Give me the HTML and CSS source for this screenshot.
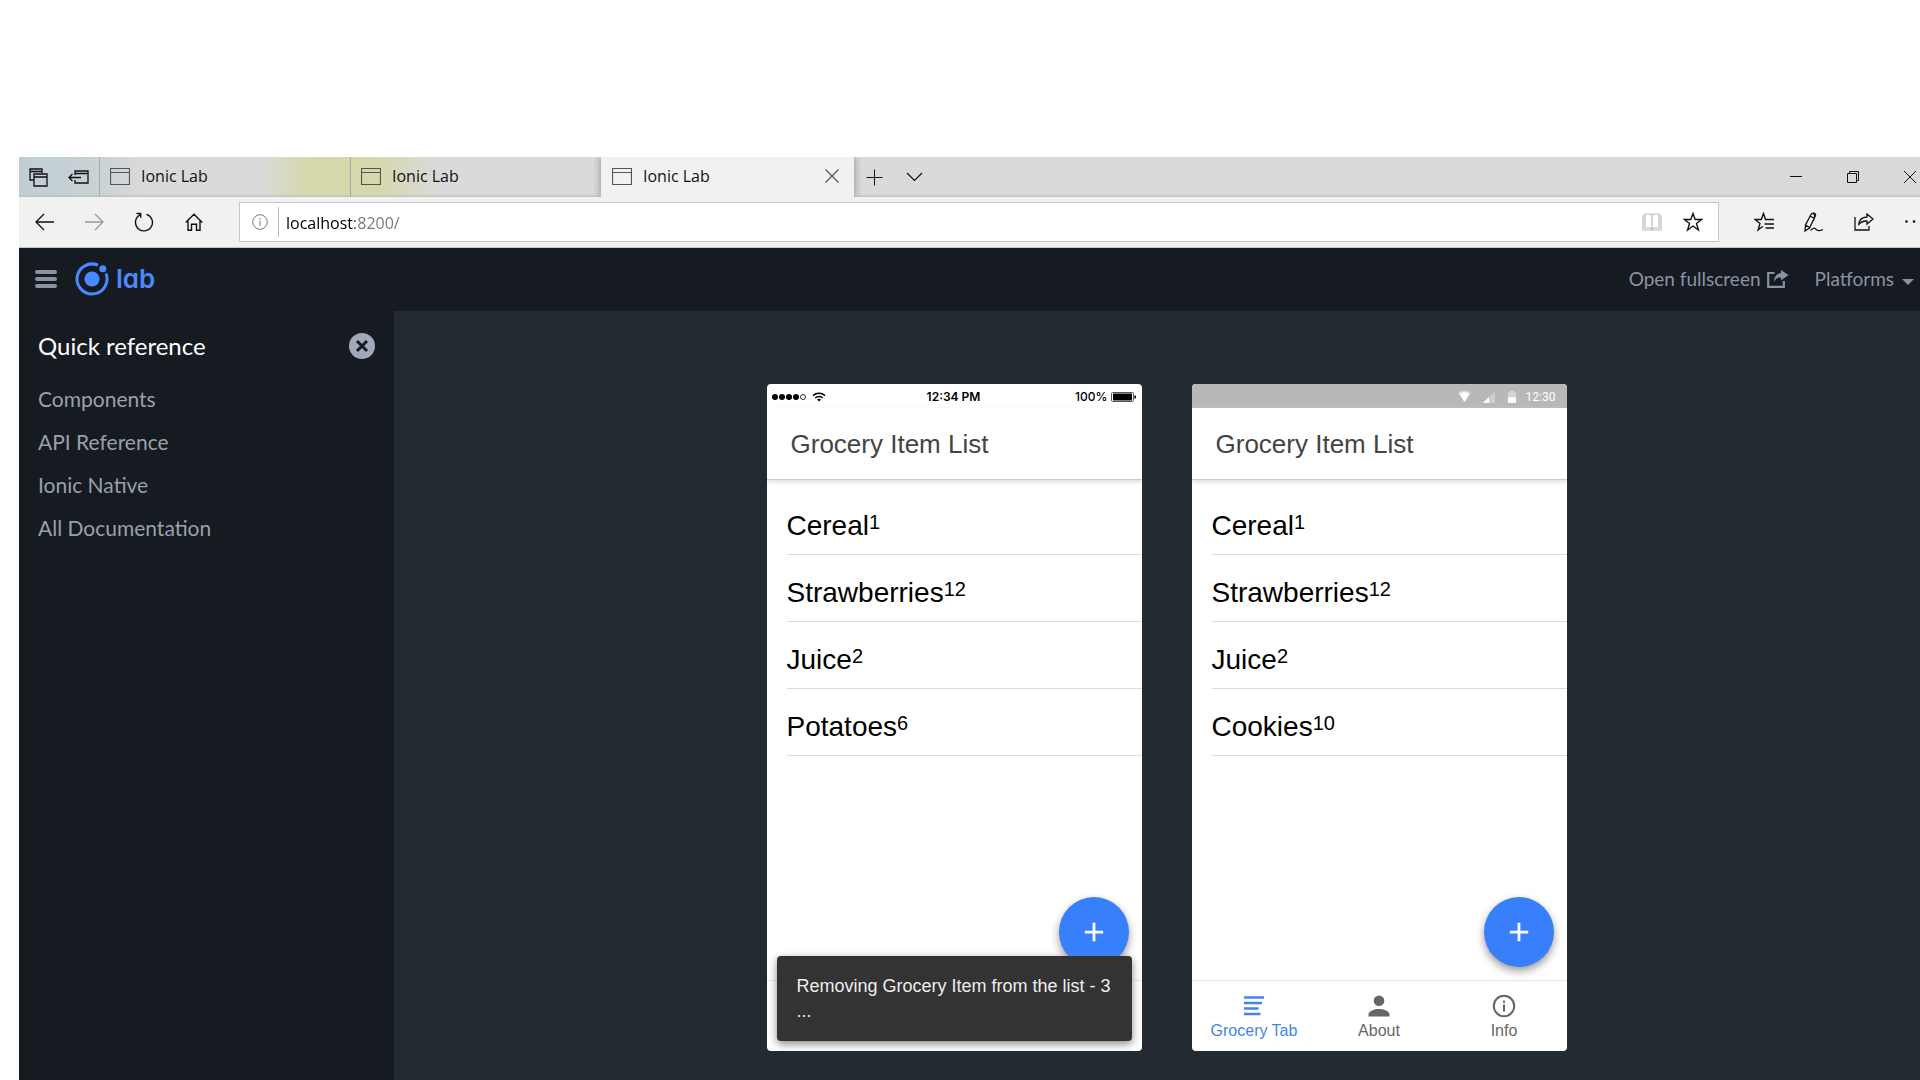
FILE: index.html
```html
<!DOCTYPE html>
<html lang="en">
<head>
<meta charset="utf-8">
<title>Ionic Lab</title>
<link rel="stylesheet" href="styles.css">
</head>
<body>
<svg class="sprite" aria-hidden="true">
  <symbol id="page" viewBox="0 0 20 17"><path d="M.5.5h19v16H.5zM.5 4.500h19" fill="none" stroke="currentColor" stroke-width="1.200"/></symbol>
  <symbol id="plus" viewBox="0 0 24 24"><path d="M12 2v20M2 12h20" fill="none" stroke="currentColor" stroke-width="3"/></symbol>
  <symbol id="lines" viewBox="0 0 24 24"><path d="M2 3.500h20M2 9h18M2 14.500h14.500M2 20h16.500" fill="none" stroke="currentColor" stroke-width="2.600"/></symbol>
  <symbol id="cross" viewBox="0 0 14 14"><path d="M.5.5l13 13M13.500.5l-13 13" fill="none" stroke="currentColor" stroke-width="1.200"/></symbol>
</svg>

<div class="window">
  <div class="tabstrip">
    <div class="tab-tools">
      <button class="icon-btn" aria-label="Tabs you've set aside"><svg width="19" height="19" viewBox="0 0 19 19" fill="none" stroke="currentColor" stroke-width="1.300"><path d="M5 12H1V1h12v4M1 3.500h12M5 6h13v12H5zM5 9h13"/></svg></button>
      <button class="icon-btn" aria-label="Set these tabs aside"><svg width="21" height="15" viewBox="0 0 21 15" fill="none" stroke="currentColor" stroke-width="1.300"><path d="M7 5V1h13v12H7V10M7 3.500h13M1 7.500h12M4.500 4L1 7.500 4.500 11"/></svg></button>
    </div>
    <button class="tab"><svg width="20" height="17"><use href="#page"/></svg><span>Ionic Lab</span></button>
    <button class="tab"><svg width="20" height="17"><use href="#page"/></svg><span>Ionic Lab</span></button>
    <div class="tab tab-active"><svg width="20" height="17"><use href="#page"/></svg><span>Ionic Lab</span><button class="tab-close" aria-label="Close tab"><svg width="14" height="14"><use href="#cross"/></svg></button></div>
    <button class="icon-btn strip-btn" aria-label="New tab"><svg width="17" height="17" viewBox="0 0 17 17" stroke="currentColor"><path d="M8.500.5v16M.5 8.500h16"/></svg></button>
    <button class="icon-btn strip-btn" aria-label="Tab previews"><svg width="17" height="10" viewBox="0 0 17 10" fill="none" stroke="currentColor" stroke-width="1.200"><path d="M1 1l7.500 7.500L16 1"/></svg></button>
    <div class="win-controls">
      <button class="win-btn" aria-label="Minimize"><svg width="12" height="12" viewBox="0 0 12 12" stroke="currentColor"><path d="M0 5.500h12"/></svg></button>
      <button class="win-btn" aria-label="Restore"><svg width="12" height="12" viewBox="0 0 12 12" fill="none" stroke="currentColor"><path d="M.5 2.500h9v9h-9zM2.500 2.500v-2h9v9h-2"/></svg></button>
      <button class="win-btn" aria-label="Close"><svg width="12" height="12" viewBox="0 0 12 12" stroke="currentColor"><path d="M0 0l12 12M12 0L0 12"/></svg></button>
    </div>
  </div>

  <div class="toolbar">
    <button class="nav-btn" aria-label="Back"><svg width="19" height="18" viewBox="0 0 19 18" fill="none" stroke="currentColor" stroke-width="1.300"><path d="M19 9H1M9 1L1 9l8 8"/></svg></button>
    <button class="nav-btn nav-off" aria-label="Forward"><svg width="19" height="18" viewBox="0 0 19 18" fill="none" stroke="currentColor" stroke-width="1.300"><path d="M0 9h18M10 1l8 8-8 8"/></svg></button>
    <button class="nav-btn" aria-label="Refresh"><svg width="20" height="20" viewBox="0 0 20 20" fill="none" stroke="currentColor" stroke-width="1.400"><path d="M12.500 2.300a8.500 8.500 0 1 1-6.500.6M2.500 1.500h4.200v4.200"/></svg></button>
    <button class="nav-btn" aria-label="Home"><svg width="18" height="18" viewBox="0 0 18 18" fill="none" stroke="currentColor" stroke-width="1.400"><path d="M.7 9.500L9 1.200l8.300 8.300M3 7.500v9.700h3.500v-6h5v6H15V7.500"/></svg></button>
    <div class="address">
      <svg class="address-info" width="16" height="16" viewBox="0 0 16 16" fill="none" stroke="currentColor"><circle cx="8" cy="8" r="7.300"/><path d="M8 6.800v5M8 4v1.500"/></svg>
      <input class="address-field" type="text" value="localhost:8200/" aria-label="Address">
      <button class="address-btn address-book" aria-label="Reading view"><svg width="20" height="18" viewBox="0 0 20 18" fill="none" stroke="currentColor" stroke-width="1.200"><path d="M3 1h5l2 1 2-1h5v14h-5l-2 1-2-1H3zM10 2v14M3 3H1v14h18V3h-2"/></svg></button>
      <button class="address-btn" aria-label="Add to favorites"><svg width="20" height="20" viewBox="0 0 20 20" fill="none" stroke="currentColor" stroke-width="1.400"><path d="M10 1.500l2.200 6H18.500l-5 3.900 1.900 6.600L10 14l-5.400 4 1.900-6.600-5-3.900h6.300z"/></svg></button>
    </div>
    <button class="nav-btn" aria-label="Hub"><svg width="20" height="20" viewBox="0 0 20 20" fill="none" stroke="currentColor" stroke-width="1.400"><path d="M13 7.500h-1.500L9.500 1.500l-2.200 6H1l5 3.900L4.100 18 9 14.300M11.500 7.500H20M10.500 12H20M11.500 16H20"/></svg></button>
    <button class="nav-btn" aria-label="Add notes"><svg width="20" height="20" viewBox="0 0 20 20" fill="none" stroke="currentColor" stroke-width="1.300"><path d="M1 19l.5-6L7 2.500C8 .5 12 .5 11.500 3.500L5.500 16zM6 4l4.500 2.500M9.500 1.500l1.500 2-1.500 5M1.500 13l4 2.500M6.500 18.500c3.500-3.500 4.500-2.500 6-.8 1.800 1.800 3.500 1.300 6.500-.2"/></svg></button>
    <button class="nav-btn" aria-label="Share"><svg width="20" height="18" viewBox="0 0 20 18" fill="none" stroke="currentColor" stroke-width="1.300"><path d="M1 4v13h14v-4M13 1l6 5-6 5V8c-4-.2-6.500 1-8.500 4C5 7 8 4.200 13 4z"/></svg></button>
    <button class="nav-btn" aria-label="More"><svg width="18" height="4" viewBox="0 0 18 4" fill="currentColor"><circle cx="1.500" cy="1.500" r="1.300"/><circle cx="9" cy="1.500" r="1.300"/><circle cx="16.500" cy="1.500" r="1.300"/></svg></button>
  </div>

  <header class="lab-header">
    <button class="menu-btn" aria-label="Menu"><svg width="22" height="18" viewBox="0 0 22 18" stroke="currentColor" stroke-width="4" stroke-linecap="round"><path d="M2 2h18M2 9h18M2 16h18"/></svg></button>
    <a class="logo" href="#"><svg width="34" height="34" viewBox="0 0 34 34" fill="currentColor"><path d="M23 3.200A15 15 0 1 0 31 11.500" fill="none" stroke="currentColor" stroke-width="3"/><circle cx="17" cy="17" r="7.600"/><circle cx="27.800" cy="6.700" r="3.500"/></svg><span>lab</span></a>
    <nav class="lab-nav">
      <a class="lab-link" href="#">Open fullscreen <svg width="22" height="18" viewBox="0 0 22 18" fill="none" stroke="currentColor" stroke-width="2.200"><path d="M7.500 3H1.200v13.800h15.600V11"/><path d="M14 0l7.500 5L14 10.500V7.500c-3.500 0-5.500 1-7 4.500 0-5 2.500-8.500 7-9z" fill="currentColor" stroke="none"/></svg></a>
      <button class="lab-link">Platforms <svg class="caret" width="12" height="6" viewBox="0 0 12 6" fill="currentColor"><path d="M0 0h12L6 6z"/></svg></button>
    </nav>
  </header>

  <div class="lab-body">
    <aside class="sidebar">
      <div class="sidebar-head">
        <h2>Quick reference</h2>
        <button class="sidebar-close" aria-label="Close"><svg width="26" height="26" viewBox="0 0 26 26"><circle cx="13" cy="13" r="13" fill="#a2a9b8"/><path d="M8 8l10 10M18 8L8 18" stroke="#161a21" stroke-width="3"/></svg></button>
      </div>
      <ul class="doc-links">
        <li><a href="#">Components</a></li>
        <li><a href="#">API Reference</a></li>
        <li><a href="#">Ionic Native</a></li>
        <li><a href="#">All Documentation</a></li>
      </ul>
    </aside>

    <main class="stage">
      <section class="phone">
        <div class="status status-ios">
          <div class="signal"><svg width="54" height="14" viewBox="0 0 54 14"><circle cx="3" cy="7" r="3"/><circle cx="10" cy="7" r="3"/><circle cx="17" cy="7" r="3"/><circle cx="24" cy="7" r="3"/><circle cx="31" cy="7" r="2.500" fill="none" stroke="#000" stroke-width=".8"/><g fill="none" stroke="#000" stroke-width="1.500"><path d="M41 5.600a9 9 0 0 1 12 0M43.200 8a5.800 5.800 0 0 1 7.600 0"/></g><path d="M45 9.600a3 3 0 0 1 4 0L47 11.500z"/></svg></div>
          <span class="ios-time">12:34 PM</span>
          <div class="ios-battery"><span>100%</span><svg width="25" height="10" viewBox="0 0 25 10"><rect x=".5" y=".5" width="22" height="9" rx="1" fill="none" stroke="#555"/><path d="M2 1.500h19v7H2zM23.500 3l1.500 1v2l-1.500 1z"/></svg></div>
        </div>
        <h1 class="app-title">Grocery Item List</h1>
        <ul class="items">
          <li>Cereal<sup>1</sup></li>
          <li>Strawberries<sup>12</sup></li>
          <li>Juice<sup>2</sup></li>
          <li>Potatoes<sup>6</sup></li>
        </ul>
        <button class="fab" aria-label="Add item"><svg width="22" height="22"><use href="#plus"/></svg></button>
        <nav class="app-tabs"></nav>
        <div class="toast" role="status">Removing Grocery Item from the list - 3 ...</div>
      </section>

      <section class="phone">
        <div class="status status-android">
          <svg width="60" height="14" viewBox="0 0 60 14" fill="#fff"><path d="M0 3a10 10 0 0 1 13 0L6.500 12z" opacity=".4"/><path d="M1.500 4a8 8 0 0 1 10 0L6.500 12z"/><path d="M25 13L37 1v12z" opacity=".3"/><path d="M25 13l6-6v6z"/><path d="M50 2.500h2V1h4v1.500h2V13h-8z" opacity=".4"/><path d="M50 7h8v6h-8z"/></svg>
          <span>12:30</span>
        </div>
        <h1 class="app-title">Grocery Item List</h1>
        <ul class="items">
          <li>Cereal<sup>1</sup></li>
          <li>Strawberries<sup>12</sup></li>
          <li>Juice<sup>2</sup></li>
          <li>Cookies<sup>10</sup></li>
        </ul>
        <button class="fab" aria-label="Add item"><svg width="22" height="22"><use href="#plus"/></svg></button>
        <nav class="app-tabs">
          <a class="app-tab app-tab-on" href="#"><svg width="24" height="24"><use href="#lines"/></svg>Grocery Tab</a>
          <a class="app-tab" href="#"><svg width="24" height="24" viewBox="0 0 24 24" fill="currentColor"><circle cx="12" cy="6.700" r="5.300"/><path d="M1.500 22.500v-2c0-3.500 6-5.500 10.500-5.500s10.500 2 10.500 5.500v2z"/></svg>About</a>
          <a class="app-tab" href="#"><svg width="24" height="24" viewBox="0 0 24 24" fill="none" stroke="currentColor" stroke-width="2"><circle cx="12" cy="12" r="10.200"/><path d="M12 10.500v7M12 6.500v2.200"/></svg>Info</a>
        </nav>
      </section>
    </main>
  </div>
</div>
</body>
</html>
```
FILE: styles.css
```css
* { box-sizing: border-box; }
body { margin: 0; background: #fff; overflow: hidden; font-family: "Liberation Sans", Arial, sans-serif; }
button { margin: 0; padding: 0; border: 0; background: none; color: inherit; font: inherit; }
a { color: inherit; text-decoration: none; }
ul { margin: 0; padding: 0; list-style: none; }
h1, h2 { margin: 0; font-weight: 400; }
svg { flex: none; display: block; }
.sprite { position: absolute; width: 0; height: 0; }

/* the window runs past the right edge of the screen */
.window { display: flex; flex-direction: column; min-height: calc(100vh - 157px); margin: 157px -19px 0 19px; }

.tabstrip {
  display: flex; height: 40px; color: #111;
  background: linear-gradient(90deg, #c0ced3 0, #c9d2d5 80px, #dadada 130px, #dadada 240px, #d6d8ac 290px, #d6d8ac 360px, #dadada 420px);
  box-shadow: inset 0 -3px 3px -2px #bbb;
  font: 16px/24px "Open Sans", "Noto Sans", sans-serif;
}
.tab-tools { display: flex; width: 80px; align-items: center; justify-content: space-around; }
.icon-btn { display: flex; align-items: center; justify-content: center; }
.tab { display: flex; align-items: center; gap: 11px; width: 251px; padding: 0 15px 2px 10px; border-left: 1px solid #a9aba8; text-align: left; }
.tab svg { color: #555; }
.tab-active { width: 253px; padding-left: 11px; background: #f1f1f1; border-left: 0; box-shadow: 0 0 8px #888; clip-path: inset(0 -8px 0 -8px); }
.tab-close { margin-left: auto; }
.strip-btn { width: 40px; }
.win-controls { display: flex; margin-left: auto; padding-right: 1px; }
.win-btn { display: flex; width: 57px; align-items: center; justify-content: center; }

.toolbar { display: flex; height: 51px; align-items: center; background: #f1f1f1; border-bottom: 1px solid #c4c4c4; color: #111; }
.nav-btn { display: flex; flex: none; width: 50px; height: 40px; align-items: center; justify-content: center; }
.nav-off { color: #999; }
.address { display: flex; flex: 1; align-items: center; height: 40px; margin: 0 20px; padding: 0 5px 0 12px; background: #fff; border: 1px solid #c6c6c6; }
.address-info { margin-right: 10px; color: #777; }
.address-field {
  flex: 1; height: 30px; padding: 2px 0 0 7px; border: 0; border-left: 1px solid #bbb; outline: 0;
  font: 16px/24px "Open Sans", "Noto Sans", sans-serif;
  color: transparent; background: linear-gradient(90deg, #000 76px, #777 76px) text;
}
.address-btn { display: flex; width: 41px; justify-content: center; }
.address-book { color: #bbb; }

.lab-header { display: flex; align-items: center; height: 63px; padding: 0 25px 2px 16px; background: #161a21; color: #8b93a2; font: 19px/24px Lato, sans-serif; }
.logo { display: flex; align-items: center; gap: 7px; margin-left: 18px; color: #488aff; font: 600 26px/34px Inter, sans-serif; font-feature-settings: "cv11"; }
.lab-nav { display: flex; gap: 26px; margin-left: auto; }
.lab-link { display: flex; align-items: center; gap: 6px; }
.lab-link .caret { margin: 6px 0 0 2px; }

.lab-body { display: flex; flex: 1; }
.sidebar { flex: none; width: 375px; padding: 18px 19px; background: #161a21; font-family: Lato, sans-serif; }
.sidebar-head { display: flex; align-items: center; justify-content: space-between; }
.sidebar-head h2 { color: #fff; font-size: 24px; line-height: 34px; }
.doc-links { margin-top: 14px; color: #9aa0aa; font-size: 21px; line-height: 43px; }

.stage { display: flex; flex: 1; align-items: flex-start; justify-content: center; gap: 50px; padding: 73px 0 29px; background: #242a32; }
.phone { position: relative; display: flex; flex-direction: column; width: 375px; min-height: 667px; background: #fff; border-radius: 4px; overflow: hidden; }
.status { display: flex; align-items: center; height: 24px; font-size: 12px; line-height: 16px; }
.status-ios { padding: 1px 6px 0 5px; font-family: Inter, sans-serif; }
.signal, .ios-battery { flex: 1; }
.ios-time { font-weight: 600; }
.ios-battery { display: flex; align-items: center; justify-content: flex-end; gap: 3px; font-weight: 500; }
.status-android { justify-content: flex-end; gap: 8px; padding: 1px 11px 0; background: #b8b8b8; color: #fff; font-family: Roboto, sans-serif; }
.app-title { padding: 21px 24px 20px; border-bottom: 1px solid #ccc; box-shadow: 0 2px 4px #ddd; color: #444; font-size: 26px; line-height: 30px; }
.items { padding: 8px 0 0 20px; }
.items li { height: 67px; padding-top: 18px; border-bottom: 1px solid #dcdcdc; color: #000; font-size: 28px; line-height: 40px; }
.items sup { font-size: 20px; line-height: 0; vertical-align: 6px; }
.fab { display: flex; align-items: center; justify-content: center; width: 70px; height: 70px; margin: auto 13px 13px auto; border-radius: 50%; background: #387ffb; color: #fff; box-shadow: 0 4px 8px #999; }
.app-tabs { display: flex; height: 71px; border-top: 1px solid #e6e6e6; color: #666; }
.app-tab { display: flex; flex: 1; flex-direction: column; align-items: center; gap: 4px; padding-top: 13px; font-size: 16px; line-height: 18px; }
.app-tab-on { color: #4484ec; }
.toast { position: absolute; right: 10px; bottom: 10px; left: 10px; padding: 18px 20px 17px; border-radius: 4px; background: #333; box-shadow: 0 3px 8px #888; color: #eee; font-size: 18px; line-height: 25px; }
```
